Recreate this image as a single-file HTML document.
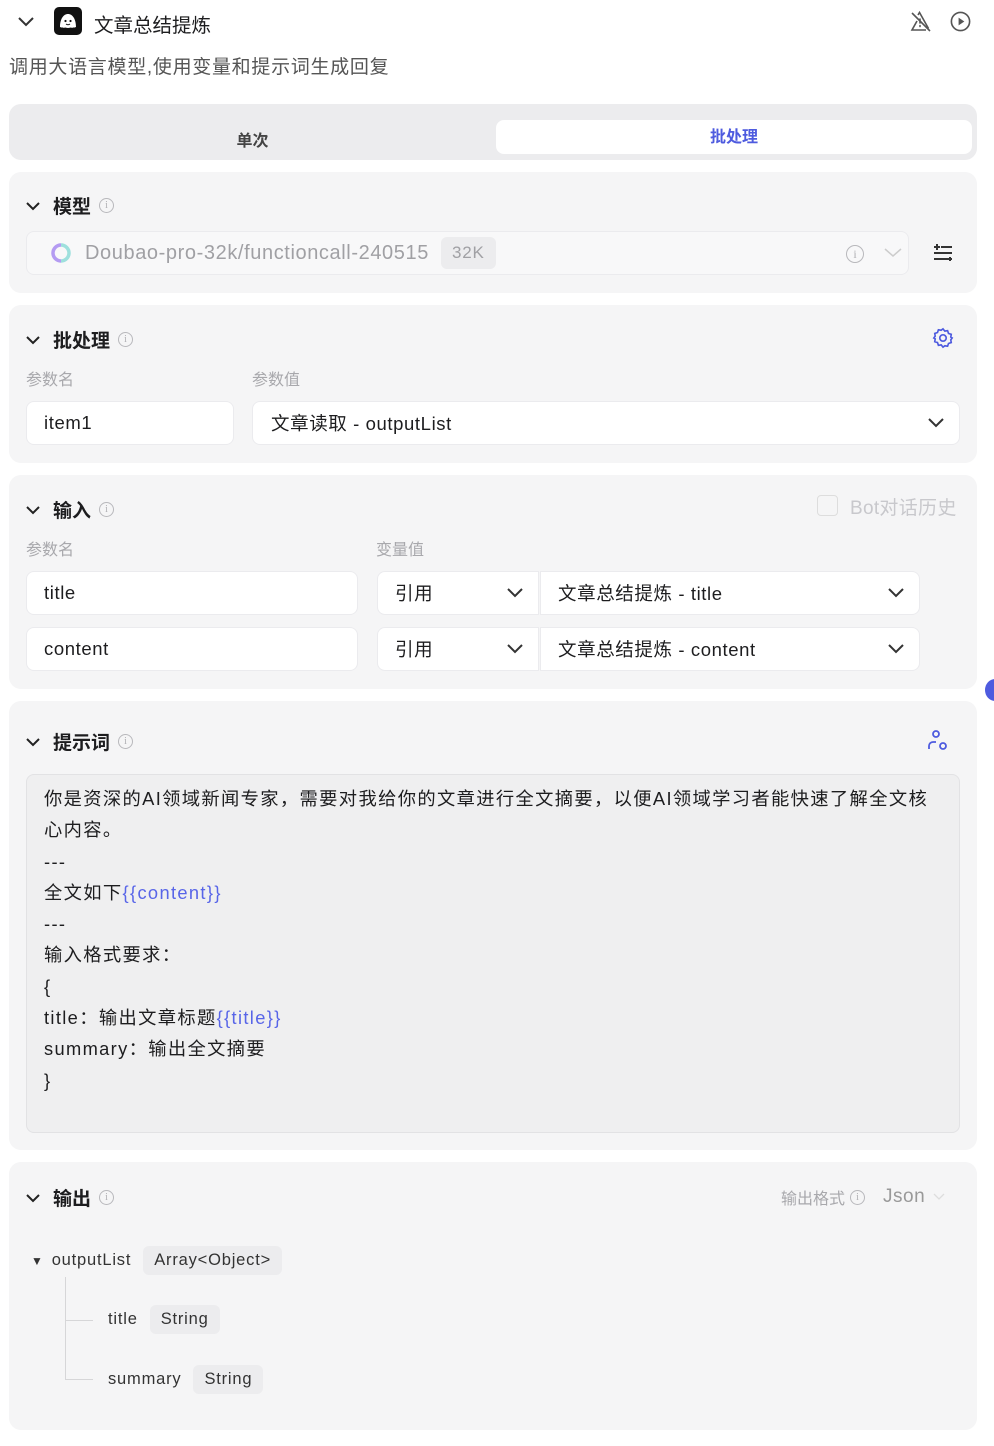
<!DOCTYPE html>
<html><head><meta charset="utf-8"><style>
*{box-sizing:border-box;margin:0;padding:0}
body{width:994px;height:1446px;background:#fff;font-family:"Liberation Sans","Noto Sans CJK SC",sans-serif;color:#1d1d1f;position:relative;overflow:hidden}
.a{position:absolute}
.panel{position:absolute;left:9px;width:968px;background:#f5f5f6;border-radius:12px}
.hd{position:absolute;left:16px;display:flex;align-items:center;font-size:19px;font-weight:bold;color:#1d1d1f}
.hd svg{margin-right:12px}
.info{display:inline-block;width:15px;height:15px;border:1.3px solid #b8b8bc;border-radius:50%;margin-left:8px;font-size:10px;color:#b0b0b4;text-align:center;line-height:13px;font-weight:normal;font-family:"Liberation Serif",serif;letter-spacing:0}
.lbl{position:absolute;font-size:16px;color:#a8a8ac}
.box{position:absolute;background:#fff;border:1px solid #ebebee;border-radius:8px;font-size:18.5px;letter-spacing:0.6px;display:flex;align-items:center;padding-left:17px;color:#1d1d1f}
.chev{position:absolute;top:50%;margin-top:-5px}
.tag{display:inline-block;background:#ececee;border-radius:6px;padding:0 11px;height:29px;line-height:29px;font-size:16.5px;letter-spacing:0.8px;color:#333;margin-left:12px}
.v{color:#5865e8}
.tree{font-size:16.5px;letter-spacing:0.8px}
</style></head><body>
<svg class="a" style="left:17px;top:16px" width="18" height="12" viewBox="0 0 18 12"><path d="M2 2l7 7 7-7" fill="none" stroke="#333" stroke-width="2"/></svg>
<div class="a" style="left:54px;top:7px;width:28px;height:28px;background:#111;border-radius:5px"><svg width="28" height="28" viewBox="0 0 28 28"><path d="M6 20c0-8 3.5-13 8-13s8 5 8 13c-2 1-3 0-4 1-1-1-2 0-4 0s-3-1-4 0c-1-1-2 0-4-1z" fill="#fff"/><circle cx="11.5" cy="14" r="1.1" fill="#111"/><circle cx="16.5" cy="14" r="1.1" fill="#111"/><path d="M12 17q2 1.5 4 0" stroke="#111" fill="none"/></svg></div>
<div class="a" style="left:94px;top:9px;font-size:19.5px;color:#1d1d1f">文章总结提炼</div>
<svg class="a" style="left:909px;top:10px" width="24" height="24" viewBox="0 0 24 24" fill="none" stroke="#555" stroke-width="1.6"><path d="M9 5l1.5-2.5 9 16M17 20H3l5-9"/><path d="M11 9v4M11 15.5v1" stroke-linecap="round"/><path d="M3 3l18 18"/></svg>
<svg class="a" style="left:949px;top:10px" width="23" height="23" viewBox="0 0 24 24"><circle cx="12" cy="12" r="9.5" fill="none" stroke="#555" stroke-width="1.7"/><path d="M10 8v8l6-4z" fill="#555"/></svg>
<div class="a" style="left:9px;top:52px;font-size:19px;letter-spacing:0.7px;color:#555">调用大语言模型,使用变量和提示词生成回复</div>

<div class="panel" style="top:104px;height:56px;background:#ececee"></div>
<div class="a" style="left:9px;top:127px;width:487px;text-align:center;font-size:16px;font-weight:bold;color:#444">单次</div>
<div class="a" style="left:496px;top:120px;width:476px;height:34px;background:#fff;border-radius:8px;text-align:center;line-height:36px;font-size:16px;font-weight:bold;color:#4e5bdf">批处理</div>

<div class="panel" style="top:172px;height:121px"></div>
<div class="hd" style="left:25px;top:192px"><svg width="16" height="10" viewBox="0 0 16 10"><path d="M2 2l6 6 6-6" fill="none" stroke="#222" stroke-width="2"/></svg>模型<span class="info">i</span></div>
<div class="box" style="left:26px;top:231px;width:883px;height:44px;background:#f8f8f9;color:#a0a0a4;padding-left:24px;letter-spacing:0">
<svg width="20" height="20" viewBox="0 0 20 20"><path d="M10 2a8 8 0 1 0 0 16" fill="none" stroke="#b49bf2" stroke-width="3.5"/><path d="M10 2a8 8 0 0 1 0 16" fill="none" stroke="#9ee0dd" stroke-width="3.5"/></svg>
<span style="margin-left:14px;font-size:20px;letter-spacing:0.6px">Doubao-pro-32k/functioncall-240515</span><span class="tag" style="color:#a0a0a4;height:32px;line-height:32px;font-size:17px">32K</span>
<span class="info" style="position:absolute;left:811px;top:13px;width:18px;height:18px;line-height:16px;font-size:12px">i</span>
<svg class="chev" style="left:857px" width="18" height="10" viewBox="0 0 18 10"><path d="M1 1l8 7 8-7" fill="none" stroke="#ccc" stroke-width="1.5"/></svg></div>
<svg class="a" style="left:933px;top:243px" width="20" height="20" viewBox="0 0 20 20" stroke="#333" stroke-width="2"><path d="M8 4h11M1 10h18M1 16h14M4 1v6M1 4h6M17 14v4M15 16h4"/></svg>

<div class="panel" style="top:305px;height:158px"></div>
<div class="hd" style="left:25px;top:326px"><svg width="16" height="10" viewBox="0 0 16 10"><path d="M2 2l6 6 6-6" fill="none" stroke="#222" stroke-width="2"/></svg>批处理<span class="info">i</span></div>
<svg class="a" style="left:932px;top:327px" width="22" height="22" viewBox="0 0 24 24" fill="none" stroke="#4e5bdf" stroke-width="1.8"><path d="M12 2l2 2.5 3-.5 1 3 3 1-.5 3L22 12l-1.5 2 .5 3-3 1-1 3-3-.5L12 22l-2-2.5-3 .5-1-3-3-1 .5-3L2 12l1.5-2-.5-3 3-1 1-3 3 .5z"/><circle cx="12" cy="12" r="3.5"/></svg>
<div class="lbl" style="left:26px;top:366px">参数名</div><div class="lbl" style="left:252px;top:366px">参数值</div>
<div class="box" style="left:26px;top:401px;width:208px;height:44px">item1</div>
<div class="box" style="left:252px;top:401px;width:708px;height:44px;padding-left:18px">文章读取 - outputList<svg class="chev" style="left:675px" width="16" height="10" viewBox="0 0 16 10"><path d="M1 1l7 7 7-7" fill="none" stroke="#333" stroke-width="2"/></svg></div>

<div class="panel" style="top:475px;height:214px"></div>
<div class="hd" style="left:25px;top:496px"><svg width="16" height="10" viewBox="0 0 16 10"><path d="M2 2l6 6 6-6" fill="none" stroke="#222" stroke-width="2"/></svg>输入<span class="info">i</span></div>
<div class="a" style="left:817px;top:495px;width:21px;height:21px;border:1px solid #ddd;border-radius:4px;background:#f5f5f6"></div>
<div class="a" style="left:850px;top:493px;font-size:19px;letter-spacing:0.3px;color:#c8c8cc">Bot对话历史</div>
<div class="lbl" style="left:26px;top:536px">参数名</div><div class="lbl" style="left:376px;top:536px">变量值</div>
<div class="box" style="left:26px;top:571px;width:332px;height:44px">title</div>
<div class="box" style="left:377px;top:571px;width:162px;height:44px;border-radius:8px 0 0 8px">引用<svg class="chev" style="left:129px" width="16" height="10" viewBox="0 0 16 10"><path d="M1 1l7 7 7-7" fill="none" stroke="#333" stroke-width="2"/></svg></div>
<div class="box" style="left:540px;top:571px;width:380px;height:44px;border-radius:0 8px 8px 0">文章总结提炼 - title<svg class="chev" style="left:347px" width="16" height="10" viewBox="0 0 16 10"><path d="M1 1l7 7 7-7" fill="none" stroke="#333" stroke-width="2"/></svg></div>
<div class="box" style="left:26px;top:627px;width:332px;height:44px">content</div>
<div class="box" style="left:377px;top:627px;width:162px;height:44px;border-radius:8px 0 0 8px">引用<svg class="chev" style="left:129px" width="16" height="10" viewBox="0 0 16 10"><path d="M1 1l7 7 7-7" fill="none" stroke="#333" stroke-width="2"/></svg></div>
<div class="box" style="left:540px;top:627px;width:380px;height:44px;border-radius:0 8px 8px 0">文章总结提炼 - content<svg class="chev" style="left:347px" width="16" height="10" viewBox="0 0 16 10"><path d="M1 1l7 7 7-7" fill="none" stroke="#333" stroke-width="2"/></svg></div>
<div class="a" style="left:985px;top:679px;width:20px;height:22px;border-radius:50%;background:#4e5bdf"></div>

<div class="panel" style="top:701px;height:449px"></div>
<div class="hd" style="left:25px;top:728px"><svg width="16" height="10" viewBox="0 0 16 10"><path d="M2 2l6 6 6-6" fill="none" stroke="#222" stroke-width="2"/></svg>提示词<span class="info">i</span></div>
<svg class="a" style="left:926px;top:729px" width="24" height="24" viewBox="0 0 24 24" fill="none" stroke="#4e5bdf" stroke-width="1.8"><circle cx="10" cy="5" r="3"/><path d="M3 20v-3a4 4 0 0 1 4-4h3"/><circle cx="17" cy="17" r="3"/></svg>
<div class="a" style="left:26px;top:774px;width:934px;height:359px;background:#efeff0;border:1px solid #e2e2e4;border-radius:8px;padding:8px 17px;font-size:18.3px;letter-spacing:1.35px;line-height:31.3px;color:#1d1d1f;white-space:nowrap">你是资深的AI领域新闻专家，需要对我给你的文章进行全文摘要，以便AI领域学习者能快速了解全文核<br>心内容。<br>---<br>全文如下<span class="v">{{content}}</span><br>---<br>输入格式要求：<br>{<br>title：输出文章标题<span class="v">{{title}}</span><br>summary：输出全文摘要<br>}</div>

<div class="panel" style="top:1162px;height:268px"></div>
<div class="hd" style="left:25px;top:1184px"><svg width="16" height="10" viewBox="0 0 16 10"><path d="M2 2l6 6 6-6" fill="none" stroke="#222" stroke-width="2"/></svg>输出<span class="info">i</span></div>
<div class="a" style="left:781px;top:1185px;font-size:16px;color:#a8a8ac;display:flex;align-items:center">输出格式<span class="info" style="margin-left:5px">i</span><span style="font-size:19px;margin-left:18px;color:#999;letter-spacing:0.5px">Json</span><svg style="margin-left:8px" width="12" height="8" viewBox="0 0 12 8"><path d="M1 1l5 5 5-5" fill="none" stroke="#ddd" stroke-width="1.3"/></svg></div>
<div class="a tree" style="left:31px;top:1246px;display:flex;align-items:center;color:#333"><span style="font-size:12px;margin-right:8px">▼</span>outputList<span class="tag">Array&lt;Object&gt;</span></div>
<div class="a" style="left:65px;top:1277px;width:1px;height:103px;background:#d6d6d8"></div>
<div class="a" style="left:65px;top:1320px;width:28px;height:1px;background:#d6d6d8"></div>
<div class="a" style="left:65px;top:1379px;width:28px;height:1px;background:#d6d6d8"></div>
<div class="a tree" style="left:108px;top:1305px;display:flex;align-items:center;color:#333">title<span class="tag">String</span></div>
<div class="a tree" style="left:108px;top:1365px;display:flex;align-items:center;color:#333">summary<span class="tag">String</span></div>
</body></html>
